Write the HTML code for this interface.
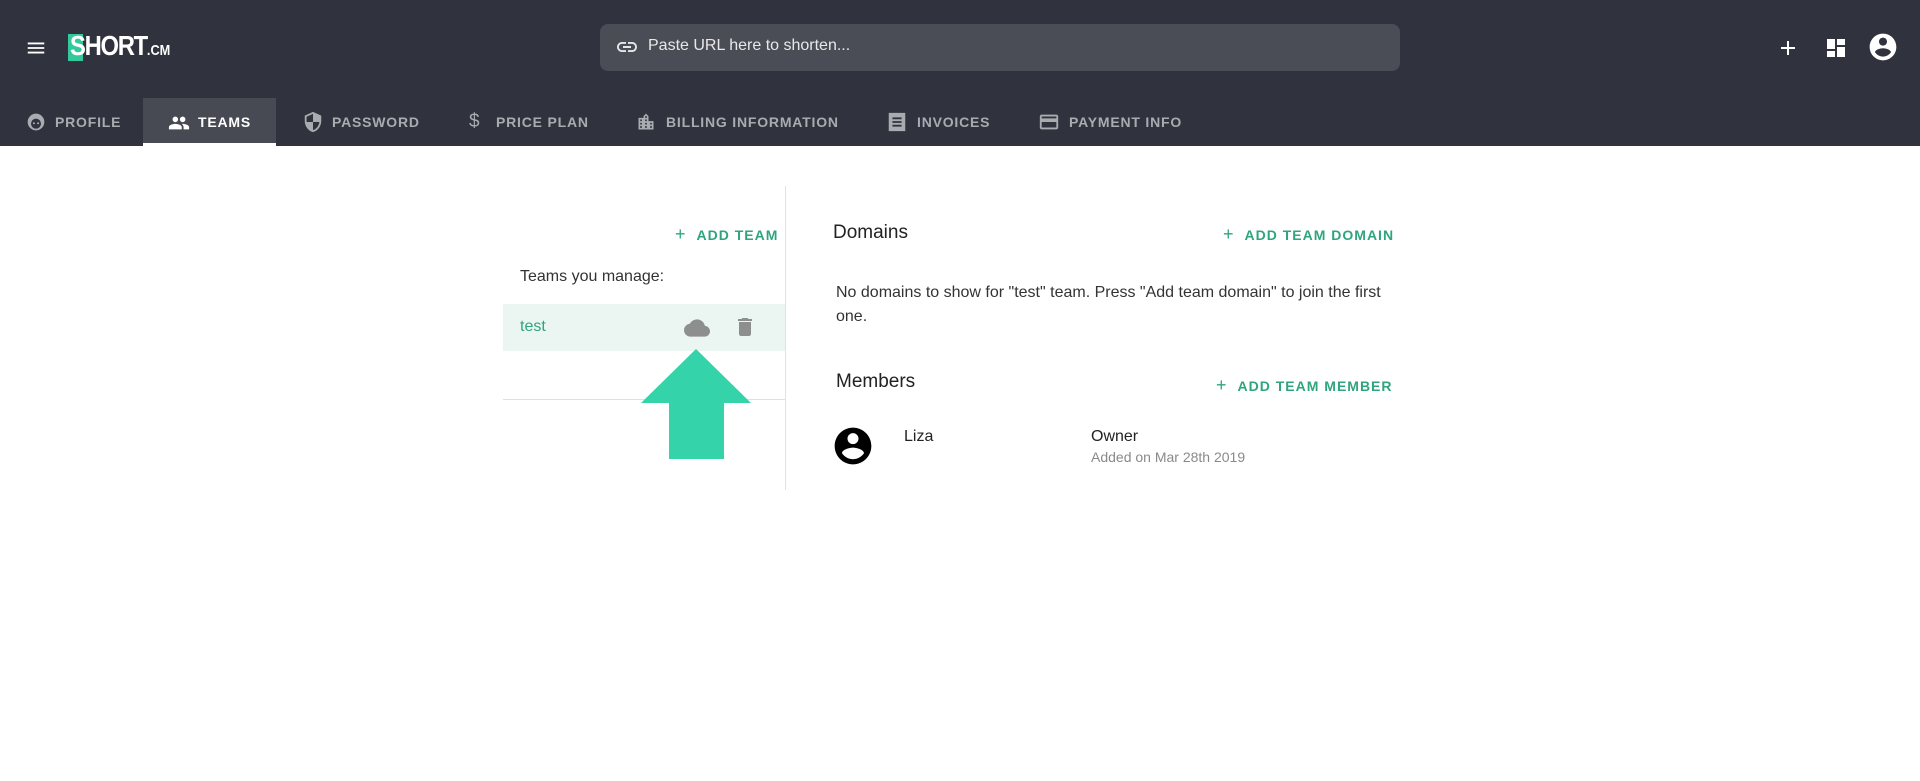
<!DOCTYPE html>
<html><head><meta charset="utf-8"><style>
*{margin:0;padding:0;box-sizing:border-box}
body{width:1920px;height:781px;background:#fff;font-family:"Liberation Sans",sans-serif;position:relative;overflow:hidden;color:#222}
.a{position:absolute}
.hdr{left:0;top:0;width:1920px;height:146px;background:#30333d}
.tab{position:absolute;top:98px;height:48px;color:#a9abb0;font-weight:bold;font-size:14px;letter-spacing:.8px;line-height:48px}
.gr{color:#2fa57e;font-weight:bold;font-size:14px;letter-spacing:1px;white-space:nowrap}
svg{display:block}
</style></head><body>
<div class="a hdr"></div>
<svg class="a" style="left:25px;top:37px" width="22" height="22" viewBox="0 0 24 24"><path d="M3 6h18v2H3zM3 11h18v2H3zM3 16h18v2H3z" fill="#fff"/></svg>
<div class="a" style="left:68px;top:34px;width:15px;height:27px;background:#34c99c"></div>
<div class="a" style="left:70px;top:30px;color:#fff;font-weight:bold;font-size:28px;letter-spacing:-1.5px;transform:scaleX(.85);transform-origin:left">SHORT<span style="font-size:15px;letter-spacing:0">.CM</span></div>
<div class="a" style="left:600px;top:24px;width:800px;height:47px;background:#4a4d55;border-radius:8px"></div>
<svg class="a" style="left:615px;top:35px" width="24" height="24" viewBox="0 0 24 24"><path d="M3.9 12c0-1.71 1.39-3.1 3.1-3.1h4V7H7c-2.76 0-5 2.240-5 5s2.24 5 5 5h4v-1.9H7c-1.71 0-3.1-1.39-3.1-3.1zM8 13h8v-2H8v2zm9-6h-4v1.9h4c1.71 0 3.1 1.39 3.1 3.1s-1.39 3.1-3.1 3.1h-4V17h4c2.76 0 5-2.24 5-5s-2.24-5-5-5z" fill="#e6e6e6"/></svg>
<div class="a" style="left:648px;top:37px;color:#e8e8e8;font-size:16px">Paste URL here to shorten...</div>
<svg class="a" style="left:1776px;top:36px" width="24" height="24" viewBox="0 0 24 24"><path d="M19 13h-6v6h-2v-6H5v-2h6V5h2v6h6z" fill="#fff"/></svg>
<svg class="a" style="left:1824px;top:36px" width="24" height="24" viewBox="0 0 24 24"><path d="M3 3h8v10H3zM13 3h8v6h-8zM13 11h8v10h-8zM3 15h8v6H3z" fill="#fff"/></svg>
<svg class="a" style="left:1867px;top:31px" width="32" height="32" viewBox="0 0 24 24"><path d="M12 2C6.48 2 2 6.48 2 12s4.48 10 10 10 10-4.48 10-10S17.52 2 12 2zm0 3c1.660 0 3 1.34 3 3s-1.34 3-3 3-3-1.34-3-3 1.34-3 3-3zm0 14.2c-2.5 0-4.71-1.28-6-3.22.03-1.99 4-3.08 6-3.08 1.99 0 5.970 1.09 6 3.08-1.29 1.94-3.5 3.22-6 3.22z" fill="#fff"/></svg>
<div class="a" style="left:143px;top:98px;width:133px;height:48px;background:#474a53"></div>
<div class="a" style="left:143px;top:143px;width:133px;height:3px;background:#fff"></div>
<svg class="a" style="left:26px;top:112px" width="20" height="20" viewBox="0 0 24 24"><circle cx="12" cy="12" r="10" fill="#a9abb0"/><circle cx="12" cy="14" r="6" fill="#30333d"/><circle cx="9.5" cy="13.5" r="1.2" fill="#a9abb0"/><circle cx="14.5" cy="13.5" r="1.2" fill="#a9abb0"/></svg>
<div class="tab" style="left:55px">PROFILE</div>
<svg class="a" style="left:168px;top:112px" width="22" height="22" viewBox="0 0 24 24"><path d="M16 11c1.66 0 2.99-1.34 2.99-3S17.66 5 16 5c-1.66 0-3 1.34-3 3s1.34 3 3 3zm-8 0c1.66 0 2.99-1.34 2.99-3S9.66 5 8 5C6.34 5 5 6.34 5 8s1.34 3 3 3zm0 2c-2.33 0-7 1.17-7 3.5V19h14v-2.5c0-2.33-4.67-3.5-7-3.5zm8 0c-.29 0-.62.02-.97.05 1.16.84 1.97 1.97 1.97 3.45V19h6v-2.5c0-2.33-4.67-3.5-7-3.5z" fill="#fff"/></svg>
<div class="tab" style="left:198px;color:#fff">TEAMS</div>
<svg class="a" style="left:302px;top:111px" width="22" height="22" viewBox="0 0 24 24"><path d="M12 1L3 5v6c0 5.55 3.84 10.74 9 12 5.16-1.26 9-6.45 9-12V5l-9-4zm0 10.99h7c-.53 4.12-3.28 7.79-7 8.94V12H5V6.3l7-3.11v8.8z" fill="#a9abb0"/></svg>
<div class="tab" style="left:332px">PASSWORD</div>
<div class="tab" style="left:469px;font-size:19px;font-weight:normal">$</div>
<div class="tab" style="left:496px">PRICE PLAN</div>
<svg class="a" style="left:636px;top:112px" width="20" height="20" viewBox="0 0 24 24"><path d="M15 11V5l-3-3-3 3v2H3v14h18V11h-6zm-8 8H5v-2h2v2zm0-4H5v-2h2v2zm0-4H5V9h2v2zm6 8h-2v-2h2v2zm0-4h-2v-2h2v2zm0-4h-2V9h2v2zm0-4h-2V5h2v2zm6 12h-2v-2h2v2zm0-4h-2v-2h2v2z" fill="#a9abb0"/></svg>
<div class="tab" style="left:666px">BILLING INFORMATION</div>
<svg class="a" style="left:886px;top:111px" width="22" height="22" viewBox="0 0 24 24"><path d="M3 2h18v20H3zM7 7h10v2H7zm0 4h10v2H7zm0 4h10v2H7z" fill="#a9abb0" fill-rule="evenodd"/></svg>
<div class="tab" style="left:917px">INVOICES</div>
<svg class="a" style="left:1038px;top:111px" width="22" height="22" viewBox="0 0 24 24"><path d="M20 4H4c-1.11 0-2 .89-2 2v12c0 1.11.89 2 2 2h16c1.11 0 2-.89 2-2V6c0-1.11-.89-2-2-2zm0 14H4v-6h16v6zm0-10H4V6h16v2z" fill="#a9abb0"/></svg>
<div class="tab" style="left:1069px">PAYMENT INFO</div>

<div class="a" style="left:785px;top:186px;width:1px;height:304px;background:#e2e2e2"></div>
<div class="a gr" style="left:675px;top:224px"><span style="font-size:18px;font-weight:normal;margin-right:10px">+</span>ADD TEAM</div>
<div class="a" style="left:520px;top:268px;font-size:16px;color:#333">Teams you manage:</div>
<div class="a" style="left:503px;top:304px;width:282px;height:47px;background:#ebf6f2"></div>
<div class="a" style="left:520px;top:318px;font-size:16px;color:#2fa57e">test</div>
<svg class="a" style="left:684px;top:315px" width="26" height="26" viewBox="0 0 24 24"><path d="M19.35 10.04C18.67 6.59 15.64 4 12 4 9.11 4 6.6 5.64 5.35 8.04 2.34 8.36 0 10.91 0 14c0 3.31 2.69 6 6 6h13c2.76 0 5-2.24 5-5 0-2.64-2.05-4.78-4.65-4.96z" fill="#8d8f8e"/></svg>
<svg class="a" style="left:733px;top:315px" width="24" height="24" viewBox="0 0 24 24"><path d="M6 19c0 1.1.9 2 2 2h8c1.1 0 2-.9 2-2V7H6v12zM19 4h-3.5l-1-1h-5l-1 1H5v2h14V4z" fill="#8d8f8e"/></svg>
<div class="a" style="left:503px;top:399px;width:282px;height:1px;background:#e0e0e0"></div>
<svg class="a" style="left:640px;top:349px" width="112" height="112"><path d="M56 0L111 54H84V110H29V54H1Z" fill="#34d3a9"/></svg>

<div class="a" style="left:833px;top:222px;font-size:19px;color:#222">Domains</div>
<div class="a gr" style="left:1223px;top:224px"><span style="font-size:18px;font-weight:normal;margin-right:10px">+</span>ADD TEAM DOMAIN</div>
<div class="a" style="left:836px;top:281px;font-size:16px;line-height:24px;width:570px;color:#333">No domains to show for "test" team. Press "Add team domain" to join the first one.</div>
<div class="a" style="left:836px;top:371px;font-size:19px;color:#222">Members</div>
<div class="a gr" style="left:1216px;top:375px"><span style="font-size:18px;font-weight:normal;margin-right:10px">+</span>ADD TEAM MEMBER</div>
<svg class="a" style="left:831px;top:424px" width="44" height="44" viewBox="0 0 24 24"><path d="M12 2C6.48 2 2 6.48 2 12s4.48 10 10 10 10-4.48 10-10S17.52 2 12 2zm0 3c1.66 0 3 1.34 3 3s-1.34 3-3 3-3-1.34-3-3 1.34-3 3-3zm0 14.2c-2.5 0-4.71-1.28-6-3.22.03-1.99 4-3.08 6-3.08 1.99 0 5.97 1.09 6 3.08-1.29 1.94-3.5 3.22-6 3.22z" fill="#000"/></svg>
<div class="a" style="left:904px;top:428px;font-size:16px;color:#222">Liza</div>
<div class="a" style="left:1091px;top:428px;font-size:16px;color:#222">Owner</div>
<div class="a" style="left:1091px;top:449px;font-size:14px;color:#8a8a8a">Added on Mar 28th 2019</div>
</body></html>
